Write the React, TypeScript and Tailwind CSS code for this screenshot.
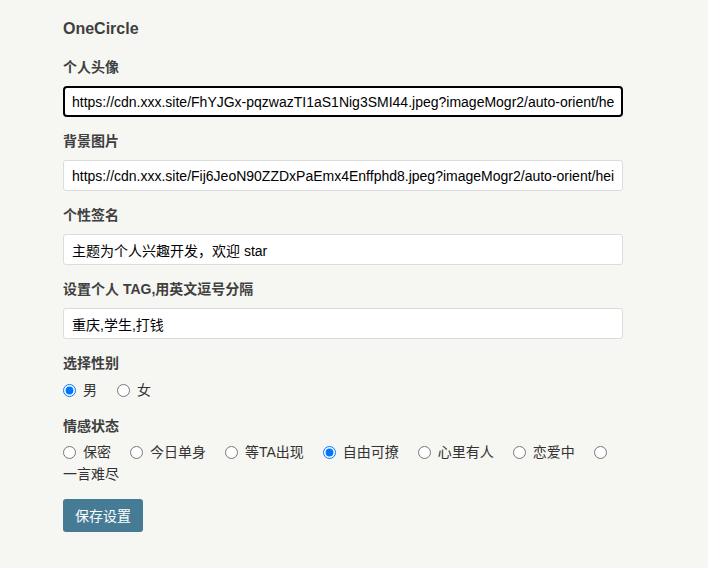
import { useState } from 'react';

const font = { fontFamily: '"Liberation Sans", "Noto Sans CJK SC", sans-serif' };

const moods = ['保密', '今日单身', '等TA出现', '自由可撩', '心里有人', '恋爱中'];

function Field({ label, value, focused }: { label: string; value: string; focused?: boolean }) {
  return (
    <div className="mb-[14px]">
      <div className="h-5 leading-5 mb-[9px] text-sm font-bold text-[#3f3f3f]">{label}</div>
      <input
        type="text"
        defaultValue={value}
        className={`block w-[560px] h-[31px] text-sm text-black bg-white outline-none ${
          focused ? 'border-2 border-black rounded-[4px] px-[7px]' : 'border border-[#dcdcdc] rounded-[3px] px-[8px]'
        }`}
        style={font}
      />
    </div>
  );
}

export default function App() {
  const [gender, setGender] = useState('男');
  const [mood, setMood] = useState('自由可撩');

  return (
    <div className="min-h-[568px] bg-[#f6f6f2] pl-[63px] pt-[19px]" style={font}>
      <div className="h-5 leading-5 mb-[18px] text-base font-bold text-[#3f3f3f]">OneCircle</div>

      <Field
        label="个人头像"
        focused
        value="https://cdn.xxx.site/FhYJGx-pqzwazTI1aS1Nig3SMI44.jpeg?imageMogr2/auto-orient/heightxxx"
      />
      <Field
        label="背景图片"
        value="https://cdn.xxx.site/Fij6JeoN90ZZDxPaEmx4Enffphd8.jpeg?imageMogr2/auto-orient/heightxxx"
      />
      <Field label="个性签名" value="主题为个人兴趣开发，欢迎 star" />
      <Field label="设置个人 TAG,用英文逗号分隔" value="重庆,学生,打钱" />

      <div className="h-5 leading-5 mb-[6px] text-sm font-bold text-[#3f3f3f]">选择性别</div>
      <div className="flex items-center gap-5 h-[22px] mb-[15px] text-sm text-[#333]">
        {['男', '女'].map((g) => (
          <label key={g} className="flex items-center gap-[7px]">
            <input
              type="radio"
              name="gender"
              checked={gender === g}
              onChange={() => setGender(g)}
              className="m-0 w-[13px] h-[13px]"
            />
            <span>{g}</span>
          </label>
        ))}
      </div>

      <div className="h-5 leading-5 mb-[5px] text-sm font-bold text-[#3f3f3f]">情感状态</div>
      <div className="w-[560px] text-sm text-[#333]">
        <div className="flex items-center gap-[19px] h-[22px]">
          {moods.map((m) => (
            <label key={m} className="flex items-center gap-[7px]">
              <input
                type="radio"
                name="mood"
                checked={mood === m}
                onChange={() => setMood(m)}
                className="m-0 w-[13px] h-[13px]"
              />
              <span>{m}</span>
            </label>
          ))}
          <input
            type="radio"
            name="mood"
            checked={mood === '一言难尽'}
            onChange={() => setMood('一言难尽')}
            className="m-0 w-[13px] h-[13px]"
          />
        </div>
        <div className="h-[22px] leading-[22px]">一言难尽</div>
      </div>

      <button className="mt-[14px] h-[33px] w-[80px] rounded-[3px] bg-[#467b95] text-sm text-white">
        保存设置
      </button>
    </div>
  );
}
